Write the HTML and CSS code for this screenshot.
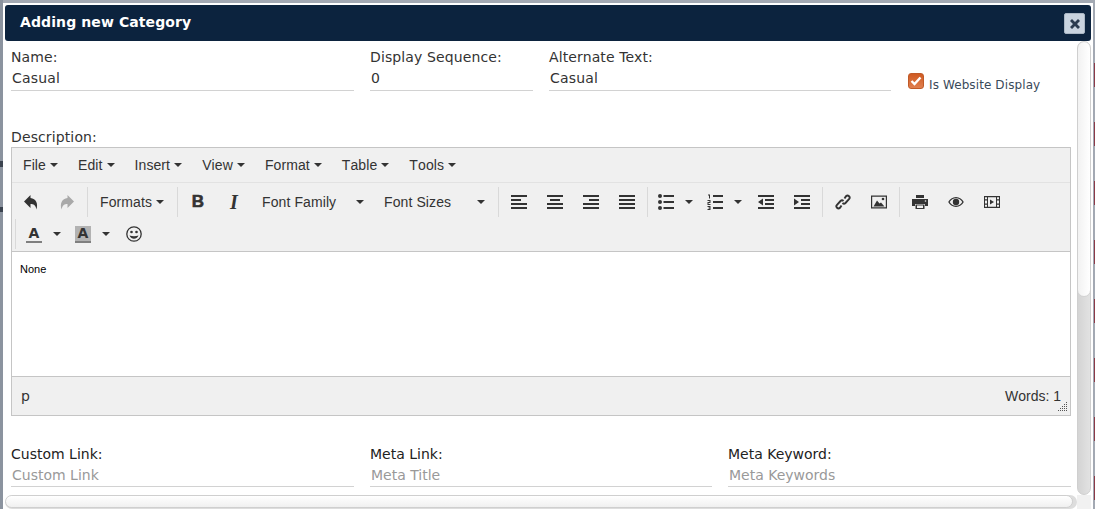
FILE: index.html
```html
<!DOCTYPE html>
<html lang="en">
<head>
<meta charset="utf-8">
<title>Adding new Category</title>
<link rel="stylesheet" href="styles.css">
</head>
<body>
<div class="dialog">
  <header class="titlebar">
    <span class="title">Adding new Category</span>
    <span class="close"><svg width="12" height="12" viewBox="0 0 12 12"><path d="M1 3l2-2 3 3 3-3 2 2-3 3 3 3-2 2-3-3-3 3-2-2 3-3z" fill="#2b3b4f"/></svg></span>
  </header>
  <div class="main">
    <div class="content">
      <div class="form-row first">
        <div class="field w343"><div class="label">Name:</div><div class="input">Casual</div></div>
        <div class="field w163"><div class="label">Display Sequence:</div><div class="input">0</div></div>
        <div class="field w342"><div class="label">Alternate Text:</div><div class="input">Casual</div></div>
        <div class="check">
          <span class="checkbox"><svg width="16" height="16" viewBox="0 0 16 16"><path d="M3.5 8l3 3 6-6.5" fill="none" stroke="#fff" stroke-width="2.4"/></svg></span>
          <span class="check-label">Is Website Display</span>
        </div>
      </div>
      <div class="label desc">Description:</div>
      <div class="editor">
        <div class="menubar">
          <span class="menu">File<i class="caret"></i></span>
          <span class="menu">Edit<i class="caret"></i></span>
          <span class="menu">Insert<i class="caret"></i></span>
          <span class="menu">View<i class="caret"></i></span>
          <span class="menu">Format<i class="caret"></i></span>
          <span class="menu">Table<i class="caret"></i></span>
          <span class="menu">Tools<i class="caret"></i></span>
        </div>
        <div class="toolbar">
          <div class="tb-row">
            <div class="group nosep">
              <span class="btn"><svg class="ic" viewBox="0 0 16 16"><path d="M7.500 1L1 7.500 7.500 14v-4c3 0 5 1 6 5.500 1.800-6-.5-11-6-11.500z" fill="#333"/></svg></span>
              <span class="btn"><svg class="ic" viewBox="0 0 16 16"><path d="M8.500 1L15 7.500 8.500 14v-4c-3 0-5 1-6 5.500C.7 9.500 3 4.500 8.500 4z" fill="#a9a9a9"/></svg></span>
            </div>
            <div class="group">
              <span class="list formats">Formats<i class="caret"></i></span>
            </div>
            <div class="group">
              <span class="btn glyph-b">B</span>
              <span class="btn glyph-i">I</span>
              <span class="list family"><span>Font Family</span><i class="caret"></i></span>
              <span class="list sizes"><span>Font Sizes</span><i class="caret"></i></span>
            </div>
            <div class="group">
              <span class="btn"><svg class="ic" viewBox="0 0 16 16"><path d="M0 1h16v2H0zM0 5h10v2H0zM0 9h16v2H0zM0 13h16v2H0z" fill="#333"/></svg></span>
              <span class="btn"><svg class="ic" viewBox="0 0 16 16"><path d="M0 1h16v2H0zM3 5h10v2H3zM0 9h16v2H0zM0 13h16v2H0z" fill="#333"/></svg></span>
              <span class="btn"><svg class="ic" viewBox="0 0 16 16"><path d="M0 1h16v2H0zM6 5h10v2H6zM0 9h16v2H0zM0 13h16v2H0z" fill="#333"/></svg></span>
              <span class="btn"><svg class="ic" viewBox="0 0 16 16"><path d="M0 1h16v2H0zM0 5h16v2H0zM0 9h16v2H0zM0 13h16v2H0z" fill="#333"/></svg></span>
            </div>
            <div class="group">
              <span class="split"><svg class="ic" viewBox="0 0 16 16"><path d="M5.500 1h10.500v2H5.500zM5.500 7h10.500v2H5.500zM5.500 13h10.500v2H5.500z" fill="#333"/><circle cx="2" cy="2" r="2" fill="#333"/><circle cx="2" cy="8" r="2" fill="#333"/><circle cx="2" cy="14" r="2" fill="#333"/></svg><i class="caret split-caret"></i></span>
              <span class="split"><svg class="ic" viewBox="0 0 16 16"><path d="M6 1h10v2H6zM6 7h10v2H6zM6 13h10v2H6z" fill="#333"/><path d="M1 .5h2v4H2V1.500H1zM.5 6h3v3H1.500v1h2v1H.5V8h2V7h-2zM.5 12h3v4h-3v-1h2v-.5h-1v-1h1V13h-2z" fill="#333"/></svg><i class="caret split-caret"></i></span>
              <span class="btn"><svg class="ic" viewBox="0 0 16 16"><path d="M0 1h16v2H0zM7 5h9v2H7zM7 9h9v2H7zM0 13h16v2H0zM5 4.500v7L0 8z" fill="#333"/></svg></span>
              <span class="btn"><svg class="ic" viewBox="0 0 16 16"><path d="M0 1h16v2H0zM7 5h9v2H7zM7 9h9v2H7zM0 13h16v2H0zM0 4.500v7L5 8z" fill="#333"/></svg></span>
            </div>
            <div class="group">
              <span class="btn"><svg class="ic" viewBox="0 0 16 16"><g fill="none" stroke="#333" stroke-width="1.900"><path d="M9.500 4.500l1.500-2.300a2.200 2.200 0 0 1 3 0 2.200 2.200 0 0 1 0 3l-3.500 3.800a2.200 2.200 0 0 1-3 0"/><path d="M6.500 11.500L5 13.800a2.200 2.200 0 0 1-3 0 2.200 2.200 0 0 1 0-3L5.500 7a2.200 2.200 0 0 1 3 0"/></g></svg></span>
              <span class="btn"><svg class="ic" viewBox="0 0 16 16"><path d="M0 1.500h16v13H0zM1.200 2.700v10.600h13.600V2.700z" fill="#333" fill-rule="evenodd"/><path d="M2.500 12.500l3.500-6 2.500 3 1.500-1 3.500 4z" fill="#333"/><circle cx="12" cy="5" r="1.300" fill="#333"/></svg></span>
            </div>
            <div class="group">
              <span class="btn"><svg class="ic" viewBox="0 0 16 16"><path d="M4 1h8v3H4zM0 5h16v7h-3v-2H3v2H0zM3.500 10.500h9V15h-9zM5 11.500V14h6v-2.500z" fill="#333" fill-rule="evenodd"/><circle cx="13.500" cy="7" r=".8" fill="#efefef"/></svg></span>
              <span class="btn"><svg class="ic" viewBox="0 0 16 16"><path d="M8 3C4.500 3 1.800 5.200.2 8c1.600 2.800 4.300 5 7.800 5s6.200-2.200 7.800-5C14.200 5.200 11.500 3 8 3zM8 4.200c2.800 0 5 1.600 6.300 3.800-1.300 2.200-3.500 3.800-6.300 3.800S3 10.200 1.700 8C3 5.800 5.200 4.200 8 4.200z" fill="#333"/><circle cx="8" cy="8" r="3.200" fill="#333"/></svg></span>
              <span class="btn"><svg class="ic" viewBox="0 0 16 16"><path d="M0 2h16v12H0zM1 3.200v2h2v-2zM1 6.500v3h2v-3zM1 10.800v2h2v-2zM13 3.200v2h2v-2zM13 6.500v3h2v-3zM13 10.800v2h2v-2zM4 3.200v9.600h8V3.200z" fill="#333" fill-rule="evenodd"/><path d="M6 5.500v5L10 8z" fill="#333"/></svg></span>
            </div>
          </div>
          <div class="tb-row second">
            <div class="group">
              <span class="split"><span class="ic color-ic"><span class="color-a">A</span></span><i class="caret split-caret"></i></span>
              <span class="split"><span class="ic color-ic back"><span class="color-a">A</span></span><i class="caret split-caret"></i></span>
              <span class="btn"><svg class="ic" viewBox="0 0 16 16"><circle cx="8" cy="8" r="7.200" fill="none" stroke="#333" stroke-width="1.300"/><circle cx="5.500" cy="6" r="1.300" fill="#333"/><circle cx="10.500" cy="6" r="1.300" fill="#333"/><path d="M3.500 9.500c1 2.300 2.700 3.300 4.500 3.300s3.500-1 4.500-3.300c-2.800 1-6.200 1-9 0z" fill="#333"/></svg></span>
            </div>
          </div>
        </div>
        <div class="edit-area"><p class="edit-text">None</p></div>
        <div class="statusbar">
          <span class="path">p</span>
          <span class="words">Words: 1</span>
          <svg class="grip" width="10" height="10" viewBox="0 0 10 10"><path d="M8 0h1v1H8zM6 2h1v1H6zM8 2h1v1H8zM4 4h1v1H4zM6 4h1v1H6zM8 4h1v1H8zM2 6h1v1H2zM4 6h1v1H4zM6 6h1v1H6zM8 6h1v1H8zM0 8h1v1H0zM2 8h1v1H2zM4 8h1v1H4zM6 8h1v1H6zM8 8h1v1H8z" fill="#555"/></svg>
        </div>
      </div>
      <div class="form-row last">
        <div class="field w343"><div class="label">Custom Link:</div><div class="input ph">Custom Link</div></div>
        <div class="field w342"><div class="label">Meta Link:</div><div class="input ph">Meta Title</div></div>
        <div class="field w343"><div class="label">Meta Keyword:</div><div class="input ph">Meta Keywords</div></div>
      </div>
    </div>
    <div class="vtrack"><div class="vthumb"></div></div>
  </div>
  <div class="hrow"><div class="htrack"><div class="hthumb"></div></div><div class="corner"></div></div>
</div>
</body>
</html>
```
FILE: styles.css
```css
* { box-sizing: border-box; }
html, body { margin: 0; height: 509px; overflow: hidden; }
body {
  padding: 3px 2px 0 3px;
  background: #a3a9b3;
  font-family: "DejaVu Sans", sans-serif;
  color: #333;
}
body::before {
  content: "";
  position: fixed;
  left: 0; top: 0; bottom: 0;
  width: 3px;
  background: linear-gradient(to bottom, #8b939f 0, #8b939f 161px, #3c4450 161px, #3c4450 167px, #8b939f 167px, #8b939f 207px, #3c4450 207px, #3c4450 212px, #8b939f 212px);
}
body::after {
  content: "";
  position: fixed;
  right: 0; top: 41px; bottom: 0;
  width: 1px;
  background: repeating-linear-gradient(to bottom, #a3a9b3 0, #a3a9b3 22px, #8c3a48 22px, #8c3a48 46px, #a3a9b3 46px, #a3a9b3 59px);
}
.dialog {
  height: 506px;
  background: #fff;
  padding: 2px 2px 0 2px;
  display: flex;
  flex-direction: column;
  position: relative;
}
.titlebar {
  height: 36px;
  flex: none;
  background: #0c233e;
  border-radius: 3px;
  padding: 0 6px 0 15px;
  display: flex;
  align-items: center;
  justify-content: space-between;
}
.title { color: #fff; font-weight: 700; font-size: 14px; letter-spacing: .1px; margin-top: -2px; }
.close {
  width: 21px; height: 21px;
  margin-top: 1px;
  background: #c9d3df;
  border: 1px solid #aab6c4;
  border-radius: 2px;
  display: flex; align-items: center; justify-content: center;
}
.main { flex: 1; min-height: 0; display: flex; }
.content { width: 1072px; padding-left: 6px; overflow: hidden; }
.form-row { display: flex; }
.form-row.first { padding-top: 6px; gap: 16px; height: 86px; }
.form-row.last { padding-top: 28px; gap: 16px; }
.w343 { width: 343px; }
.w342 { width: 342px; }
.w163 { width: 163px; }
.label { font-size: 14px; line-height: 20px; height: 20px; color: #333; }
.first .label, .desc { letter-spacing: .12px; }
.last .label { color: #222; }
.desc { height: 20px; }
.input {
  height: 24px;
  font-size: 14px;
  line-height: 22px;
  padding-left: 1px;
  letter-spacing: .2px;
  border-bottom: 1px solid #d2d2d2;
  color: #333;
}
.input.ph { color: #999; letter-spacing: 0; height: 23px; }
.check { display: flex; align-items: flex-start; padding-top: 26px; margin-left: 1px; }
.checkbox {
  width: 16px; height: 16px;
  border-radius: 3px;
  background: linear-gradient(to bottom, #cf5a22, #e08050);
  border: 1px solid #c05a28;
  display: flex; align-items: center; justify-content: center;
}
.checkbox svg { margin: -1px; flex: none; }
.check-label { font-size: 12px; letter-spacing: .1px; margin-left: 5px; margin-top: 5px; line-height: 14px; color: #3a4a5a; }

.editor {
  width: 1060px;
  height: 269px;
  border: 1px solid #c5c5c5;
  background: #f0f0f0;
  display: flex;
  flex-direction: column;
  font-family: "Liberation Sans", Arial, sans-serif;
  font-kerning: none;
}
.menubar {
  height: 35px;
  flex: none;
  border-bottom: 1px solid #e2e2e2;
  display: flex;
  align-items: center;
  padding: 0 0 1px 11px;
  gap: 20px;
  font-size: 14px;
  letter-spacing: .1px;
  color: #333;
}
.menu { display: inline-flex; align-items: center; }
.caret {
  display: inline-block;
  width: 0; height: 0;
  margin-left: 4px;
  border-left: 4px solid transparent;
  border-right: 4px solid transparent;
  border-top: 4px solid #333;
}
.toolbar {
  height: 69px;
  flex: none;
  padding: 4px 0 0 1px;
  border-bottom: 1px solid #c5c5c5;
}
.tb-row { display: flex; height: 30px; }
.tb-row.second { margin-top: 2px; }
.group {
  display: flex;
  margin-left: 2px;
  padding-left: 2px;
  border-left: 1px solid #d9d9d9;
}
.group.nosep { margin-left: 0; padding-left: 0; border-left: 0; }
.btn { width: 36px; height: 30px; display: flex; align-items: center; justify-content: center; flex: none; }
.ic { width: 16px; height: 16px; display: block; flex: none; }
.glyph-b { font: 700 17px "Liberation Sans", Arial, sans-serif; color: #333; -webkit-text-stroke: .6px #333; }
.glyph-i { font: italic 700 20px "Liberation Serif", serif; color: #333; }
.list { height: 30px; display: flex; align-items: center; font-size: 14px; letter-spacing: .1px; color: #333; padding-left: 10px; flex: none; }
.formats { width: 85px; }
.family { width: 122px; justify-content: space-between; padding-right: 10px; }
.sizes { width: 122px; justify-content: space-between; padding-right: 11px; }
.split { width: 49px; height: 30px; display: flex; align-items: center; padding-left: 8px; flex: none; }
.split-caret { margin-left: 11px; }
.color-ic { position: relative; display: flex; justify-content: center; border-bottom: 2px solid #7f7f7f; height: 17px; }
.color-ic.back { background: #b2b2b2; }
.color-a { font: 700 14px/15px "DejaVu Sans", sans-serif; color: #333; }
.edit-area { height: 125px; flex: none; background: #fff; border-bottom: 1px solid #c5c5c5; }
.edit-text { margin: 0; padding: 10px 0 0 8px; font: 11px/14px Arial, "Liberation Sans", sans-serif; color: #000; }
.statusbar {
  flex: 1;
  position: relative;
  display: flex;
  align-items: center;
  justify-content: space-between;
  padding: 0 9px 0 9px;
  font-size: 14px;
  color: #333;
}
.path { font-family: "DejaVu Sans", sans-serif; }
.grip { position: absolute; right: 2px; bottom: 3px; }

.vtrack {
  width: 14px;
  height: 454px;
  background: linear-gradient(to right, #d4d4d4, #e2e2e2);
  border: 1px solid #cfcfcf;
  border-radius: 7px;
  position: relative;
  overflow: hidden;
}
.vthumb {
  height: 256px;
  margin: -1px;
  background: linear-gradient(to right, #f2f2f2, #fff);
  border: 1px solid #d2d2d2;
  border-radius: 7px;
}
.hrow { height: 14px; flex: none; display: flex; }
.htrack {
  width: 1072px;
  background: #ddd;
  border-radius: 7px;
  overflow: hidden;
}
.hthumb {
  height: 13px;
  width: 1068px;
  background: linear-gradient(to bottom, #fff, #f0f0f0);
  border: 1px solid #cfcfcf;
  border-radius: 7px;
}
.corner { flex: 1; background: #f1f1f1; }
```
